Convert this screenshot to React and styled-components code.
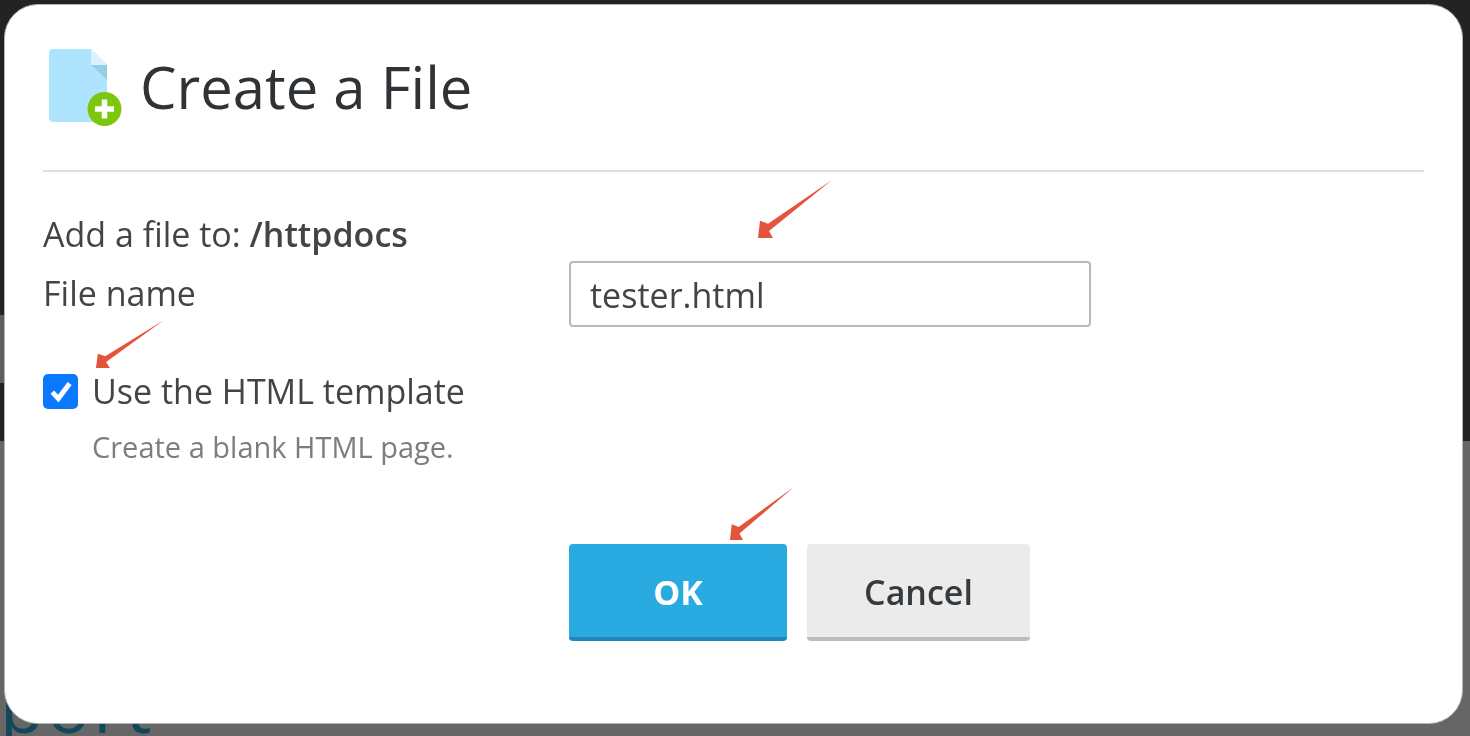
import React from "react";
import styled, { createGlobalStyle } from "styled-components";

const GlobalStyle = createGlobalStyle`
  html, body {
    margin: 0;
    padding: 0;
    background: #666;
  }
  body {
    font-family: "Open Sans", "Liberation Sans", sans-serif;
  }
`;

const Page = styled.div`
  position: relative;
  width: 1470px;
  height: 736px;
  overflow: hidden;
  display: flex;
  flex-direction: column;
`;

const DarkBand = styled.div`
  height: 441px;
  background: #232323;
  padding-top: 315px;
  box-sizing: border-box;
`;

const EdgePatch = styled.div`
  width: 5px;
  height: 68px;
  background: #5e5e5e;
`;

const DimBand = styled.div`
  flex: 1;
  background: #666;
  display: flex;
  align-items: flex-end;
`;

const BehindText = styled.div`
  font-size: 72px;
  line-height: 72px;
  letter-spacing: 3px;
  color: #12475c;
  margin-bottom: -5px;
`;

const Dialog = styled.div`
  position: absolute;
  left: 4px;
  top: 4px;
  width: 1459px;
  height: 720px;
  box-sizing: border-box;
  background: #fff;
  border: 1px solid #b4b4b4;
  border-radius: 34px;
  padding: 0 38px;
  display: flex;
  flex-direction: column;
  color: #444;
  filter: blur(0.6px);
`;

const Header = styled.header`
  height: 167px;
  box-sizing: border-box;
  padding: 43px 0 0 5px;
  display: flex;
  align-items: flex-start;
  gap: 16px;
  border-bottom: 2px solid #dedde9;
`;

const Title = styled.h1`
  margin: -1px 0 0;
  font-size: 58px;
  line-height: 80px;
  font-weight: 400;
  color: #2f3336;
`;

const Body = styled.div`
  padding-top: 39px;
  display: flex;
  flex-direction: column;
  font-size: 34px;
  line-height: 46px;
`;

const Destination = styled.div`
  height: 46px;
  strong {
    font-weight: 600;
  }
`;

const FormRow = styled.div`
  display: grid;
  grid-template-columns: 526px 522px;
`;

const FieldLabel = styled.label`
  line-height: 72px;
`;

const TextInput = styled.input`
  width: 100%;
  height: 66px;
  margin-top: 4px;
  box-sizing: border-box;
  padding: 2px 19px 0;
  border: 2px solid #b9b9b9;
  border-radius: 4px;
  font: inherit;
  color: #444;
  outline: none;
`;

const CheckRow = styled.label`
  display: flex;
  align-items: center;
  gap: 14px;
  margin-top: 39px;
  height: 46px;
`;

const CheckBox = styled.span`
  width: 35px;
  height: 35px;
  border-radius: 5px;
  background: #0a78ff;
  display: flex;
  align-items: center;
  justify-content: center;
  flex: none;
`;

const Hint = styled.div`
  margin: 13px 0 0 49px;
  font-size: 29px;
  line-height: 40px;
  color: #7d7d7d;
`;

const Actions = styled.div`
  display: flex;
  gap: 20px;
  margin: 77px 0 0 526px;
`;

const Button = styled.button`
  width: ${(p) => p.$width}px;
  height: 97px;
  box-sizing: border-box;
  border: 0;
  border-bottom: 4px solid ${(p) => (p.$primary ? "#2187b8" : "#bdbdbd")};
  border-radius: 4px;
  background: ${(p) => (p.$primary ? "#29aae1" : "#ebebeb")};
  color: ${(p) => (p.$primary ? "#fff" : "#353a3e")};
  font: ${(p) => (p.$primary ? 700 : 600)} 34px "Open Sans", sans-serif;
  padding: 2px 0 0;
`;

const Arrow = styled.svg`
  position: absolute;
  left: ${(p) => p.$x}px;
  top: ${(p) => p.$y}px;
  width: ${(p) => p.$w}px;
  height: ${(p) => p.$h}px;
  filter: blur(0.3px);
`;

const FileIcon = () => (
  <svg width="76" height="80" viewBox="0 0 76 80" style={{ flex: "none" }}>
    <path d="M5 1h38l16 16v53a4 4 0 0 1-4 4H5a4 4 0 0 1-4-4V5a4 4 0 0 1 4-4z" fill="#aee4fd" />
    <path d="M43 1l16 16H43z" fill="#d9f2fe" />
    <path d="M43 17h16v15z" fill="#94cfe6" />
    <circle cx="56.5" cy="61" r="17" fill="#7cc60c" />
    <path d="M56.5 51.5v19M47 61h19" stroke="#fff" strokeWidth="5.5" />
  </svg>
);

const PointerArrow = ({ x, y, w, h }) => (
  <Arrow $x={x} $y={y} $w={w} $h={h} viewBox="0 0 74 57" preserveAspectRatio="none">
    <path d="M74 0L10 43 2 40 0 57 15 57 11 50z" fill="#e4533c" />
  </Arrow>
);

export default function App() {
  return (
    <Page>
      <GlobalStyle />
      <DarkBand>
        <EdgePatch />
      </DarkBand>
      <DimBand>
        <BehindText>port</BehindText>
      </DimBand>
      <Dialog>
        <Header>
          <FileIcon />
          <Title>Create a File</Title>
        </Header>
        <Body>
          <Destination>
            Add a file to: <strong>/httpdocs</strong>
          </Destination>
          <FormRow>
            <FieldLabel htmlFor="file-name">File name</FieldLabel>
            <TextInput id="file-name" defaultValue="tester.html" />
          </FormRow>
          <CheckRow>
            <CheckBox>
              <svg width="26" height="26" viewBox="0 0 24 24">
                <path d="M4 13l5.5 6L20 5" fill="none" stroke="#fff" strokeWidth="4.5" />
              </svg>
            </CheckBox>
            Use the HTML template
          </CheckRow>
          <Hint>Create a blank HTML page.</Hint>
          <Actions>
            <Button $primary $width={218}>OK</Button>
            <Button $width={223}>Cancel</Button>
          </Actions>
        </Body>
      </Dialog>
      <PointerArrow x={758} y={180} w={74} h={58} />
      <PointerArrow x={96} y={320} w={68} h={48} />
      <PointerArrow x={730} y={487} w={64} h={53} />
    </Page>
  );
}
